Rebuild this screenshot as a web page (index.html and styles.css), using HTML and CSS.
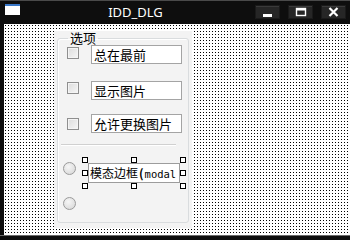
FILE: index.html
```html
<!DOCTYPE html>
<html lang="zh-CN">
<head>
    <meta charset="UTF-8">
    <title>IDD_DLG</title>
    <link rel="stylesheet" href="styles.css">
</head>
<body>
    <div class="window">
        <div class="titlebar">
            <div class="app-icon"></div>
            <div class="title">IDD_DLG</div>
            <div class="caption-buttons">
                <div class="cap-btn btn-min">
                    <svg width="11" height="10" viewBox="0 0 11 10"><rect x="1" y="7" width="9" height="3" fill="#fff"/></svg>
                </div>
                <div class="cap-btn btn-max">
                    <svg width="12" height="10" viewBox="0 0 12 10"><rect x="1.5" y="1.5" width="9" height="7" fill="none" stroke="#fff" stroke-width="1.4"/><rect x="1" y="1" width="10" height="2.5" fill="#fff"/></svg>
                </div>
                <div class="cap-btn btn-close">
                    <svg width="11" height="10" viewBox="0 0 11 10"><path d="M1.5 1 L9.5 9 M9.5 1 L1.5 9" stroke="#fff" stroke-width="2.2"/></svg>
                </div>
            </div>
        </div>

        <div class="client">
            <div class="panel">
                <fieldset class="group">
                    <legend>选项</legend>

                    <div class="row row-1">
                        <span class="check"></span>
                        <div class="edit">总在最前</div>
                    </div>
                    <div class="row row-2">
                        <span class="check"></span>
                        <div class="edit">显示图片</div>
                    </div>
                    <div class="row row-3">
                        <span class="check"></span>
                        <div class="edit">允许更换图片</div>
                    </div>

                    <div class="separator"></div>

                    <div class="row radio-row-1">
                        <span class="radio"></span>
                        <div class="selected">
                            <div class="edit edit-wide">模态边框<span class="paren">(</span><span class="mono">modal</span></div>
                            <span class="handle h-tl"></span>
                            <span class="handle h-tc"></span>
                            <span class="handle h-tr"></span>
                            <span class="handle h-ml"></span>
                            <span class="handle h-mr"></span>
                            <span class="handle h-bl"></span>
                            <span class="handle h-bc"></span>
                            <span class="handle h-br"></span>
                        </div>
                    </div>
                    <div class="row radio-row-2">
                        <span class="radio"></span>
                    </div>
                </fieldset>
            </div>
        </div>
        <div class="bottom-border"></div>
    </div>
</body>
</html>
```

FILE: styles.css
```css
body {
    margin: 0;
    background: #0d0d0d;
    font-family: "Noto Sans CJK SC", "Noto Sans", sans-serif;
}
.window {
    width: 350px;
    height: 240px;
    display: flex;
    flex-direction: column;
    background: #0d0d0d;
    overflow: hidden;
}

/* title bar */
.titlebar {
    height: 23px;
    flex: none;
    display: flex;
    align-items: flex-start;
    border-top: 1px solid #4a4a4a;
    background: #0e0e0e;
}
.app-icon {
    width: 15px;
    height: 11px;
    margin: 3px 0 0 5px;
    background: #fff;
    border-top: 2px solid #3a78c8;
    box-sizing: border-box;
}
.title {
    flex: 1;
    text-align: center;
    color: #fff;
    font-family: "Noto Sans", sans-serif;
    font-size: 13px;
    line-height: 22px;
    padding-left: 4px;
}
.caption-buttons {
    display: flex;
    margin-top: 4px;
    margin-right: 4px;
}
.cap-btn {
    width: 25px;
    height: 14px;
    display: flex;
    align-items: center;
    justify-content: center;
    background: #262626;
    border: 1px solid #1a1a1a;
    box-shadow: inset 0 1px 0 #3a3a3a;
    box-sizing: border-box;
    margin-left: 8px;
}
.cap-btn svg {
    display: block;
}

/* client area */
.client {
    flex: 1;
    margin-left: 4px;
    padding: 7px 0 0 50px;
    background-color: #fff;
    background-image: conic-gradient(at 1px 1px, transparent 75%, #000 0);
    background-size: 3px 3px;
    background-position: 1px 1px;
}
.bottom-border {
    height: 4px;
    flex: none;
    border-top: 1px solid #6a6a6a;
    background: #0d0d0d;
}

.panel {
    width: 138px;
    height: 197px;
    background: #f3f3f3;
    box-sizing: border-box;
    padding: 0 3px;
}
.group {
    margin: 0;
    padding: 0;
    height: 192px;
    box-sizing: border-box;
    border: 1px solid #d9dcde;
    border-radius: 3px;
    box-shadow: inset 1px 1px 0 #fff;
}
.group legend {
    margin-left: 10px;
    padding: 0 2px;
    font-size: 13px;
    line-height: 14px;
    color: #000;
}

.row {
    display: flex;
    align-items: flex-start;
}
.row-1 { padding-left: 9px; margin-top: 0; }
.row-2 { padding-left: 9px; margin-top: 17px; }
.row-3 { padding-left: 9px; margin-top: 14px; }
.row-1 .check { margin-top: 2px; }
.row-2 .check { margin-top: 1px; }
.row-3 .check { margin-top: 4px; }

.check {
    width: 12px;
    height: 12px;
    flex: none;
    box-sizing: border-box;
    border: 1px solid #8f8f8f;
    background: linear-gradient(135deg, #dcdcdc, #f6f6f6);
    box-shadow: inset 0 0 0 1px #f4f4f4;
    margin-right: 12px;
}
.edit {
    width: 91px;
    height: 19px;
    box-sizing: border-box;
    border: 1px solid #a4a4a4;
    background: #fff;
    font-size: 13px;
    line-height: 17px;
    padding-left: 2px;
    color: #000;
    white-space: nowrap;
    overflow: hidden;
}

.separator {
    margin: 11px 12px 0 3px;
    height: 1px;
    background: #d0d0d0;
    border-bottom: 1px solid #fff;
}

.radio-row-1 {
    padding-left: 5px;
    margin-top: 16px;
}
.radio-row-2 {
    padding-left: 5px;
    margin-top: 14px;
}
.radio {
    width: 13px;
    height: 13px;
    flex: none;
    box-sizing: border-box;
    border-radius: 50%;
    border: 1px solid #9a9a9a;
    background: radial-gradient(circle at 40% 35%, #f6f6f6, #d4d4d4);
    margin-right: 12px;
}

.selected {
    position: relative;
    margin-top: 1px;
}
.edit-wide {
    width: 92px;
    height: 20px;
    line-height: 18px;
    font-size: 12px;
    padding-left: 1px;
    border-color: #9c9c9c;
}
.paren {
    font-weight: bold;
    margin: 0 1px 0 1px;
}
.mono {
    font-family: "DejaVu Sans Mono", monospace;
    font-size: 10.5px;
}
.handle {
    position: absolute;
    width: 6px;
    height: 6px;
    box-sizing: border-box;
    border: 1px solid #000;
    background: #fff;
}
.h-tl { left: -6px; top: -6px; }
.h-tc { left: calc(50% - 3px); top: -6px; }
.h-tr { right: -6px; top: -6px; }
.h-ml { left: -6px; top: calc(50% - 3px); }
.h-mr { right: -6px; top: calc(50% - 3px); }
.h-bl { left: -6px; bottom: -6px; }
.h-bc { left: calc(50% - 3px); bottom: -6px; }
.h-br { right: -6px; bottom: -6px; }
```
